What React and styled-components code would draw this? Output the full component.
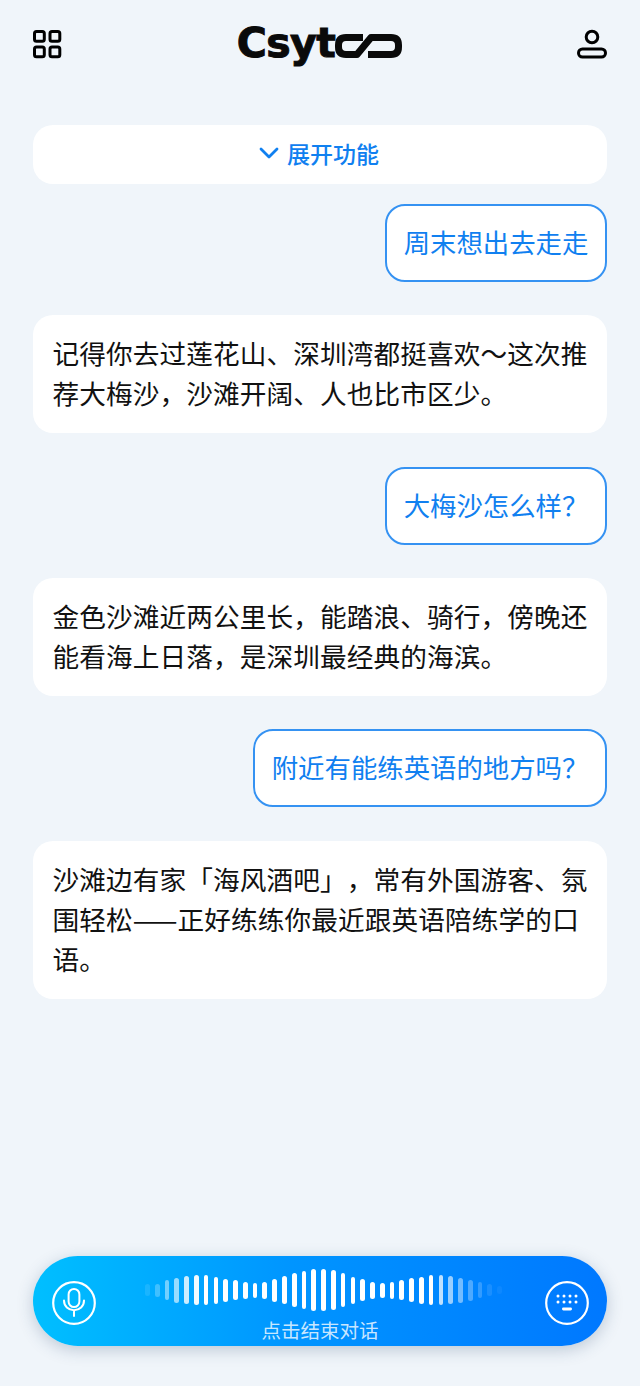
import React from "react";
import styled, { createGlobalStyle } from "styled-components";

const Global = createGlobalStyle`
  html, body { margin: 0; padding: 0; background: #f0f5fa; }
  body {
    font-family: "Noto Sans CJK SC", "Noto Sans", sans-serif;
    text-spacing-trim: space-all;
  }
  * { box-sizing: border-box; }
`;

const Screen = styled.div`
  width: 640px;
  height: 1386px;
  background: #f0f5fa;
  padding: 0 33px;
  display: flex;
  flex-direction: column;
  overflow: hidden;
`;

const Header = styled.header`
  height: 125px;
  padding-top: 24px;
  display: flex;
  justify-content: space-between;
  align-items: flex-start;
`;

const IconSlot = styled.div`
  width: 30px;
  height: 40px;
  display: flex;
  align-items: center;
  justify-content: ${(p) => (p.$end ? "flex-end" : "flex-start")};
  color: #000;
`;

const Brand = styled.div`
  display: flex;
  align-items: center;
  height: 44px;
  margin: -3px 0 0 -1px;
  color: #0a0a0a;
  font-family: "DejaVu Sans", sans-serif;
  font-weight: 700;
  font-size: 41px;
  line-height: 44px;
  letter-spacing: -0.6px;
  -webkit-text-stroke: 1px #0a0a0a;
`;

const MarkSlot = styled.span`
  display: flex;
  margin: 6px 0 0 0;
`;

const ExpandBar = styled.button`
  height: 59px;
  border: 0;
  border-radius: 20px;
  background: #fff;
  color: #1080f0;
  font: 500 23px "Noto Sans CJK SC", sans-serif;
  display: flex;
  align-items: center;
  justify-content: center;
  gap: 8px;
  margin-bottom: 20px;
  padding: 0 2px 3px 0;
`;

const Thread = styled.div`
  display: flex;
  flex-direction: column;
  gap: 33.33px;
  flex: 1;
`;

const UserBubble = styled.div`
  align-self: flex-end;
  height: 78px;
  padding: 16px 16.6px;
  border: 2px solid #3592f2;
  border-radius: 20px;
  background: #fff;
  color: #1080f0;
  font-size: 26.4px;
  line-height: 40px;
  white-space: nowrap;
`;

const ReplyBubble = styled.div`
  padding: 18px 18px 20px 19.5px;
  border-radius: 20px;
  background: #fff;
  color: #111;
  font-size: 26.67px;
  letter-spacing: 0.1px;
  line-height: 40px;
`;

const VoiceBar = styled.div`
  flex: none;
  height: 90px;
  margin-bottom: 40px;
  padding: 0 18.5px;
  border-radius: 45px;
  background: linear-gradient(90deg, #00bfff 0%, #0095ff 45%, #0078ff 100%);
  box-shadow: 0 4px 16px rgba(40, 70, 110, 0.25);
  display: flex;
  align-items: center;
  justify-content: space-between;
`;

const RoundIcon = styled.div`
  width: 44px;
  height: 44px;
  margin-top: 4px;
  display: flex;
`;

const VoiceCenter = styled.div`
  display: flex;
  flex-direction: column;
  align-items: center;
  height: 90px;
`;

const Wave = styled.div`
  height: 46px;
  margin: 11px 0 0 7px;
  display: flex;
  align-items: center;
  gap: 5.1px;
`;

const WaveBar = styled.span`
  width: 4.7px;
  border-radius: 3px;
  background: #fff;
  height: ${(p) => p.$h}px;
  opacity: ${(p) => p.$a};
`;

const VoiceLabel = styled.div`
  color: rgba(255, 255, 255, 0.8);
  font-size: 19.5px;
  line-height: 26px;
  margin-top: 4px;
`;

const waveform = [
  [12, 0.1], [13, 0.25], [20, 0.45], [25, 0.6], [28, 0.8], [30, 0.95], [30, 1], [27, 1],
  [23, 1], [20, 1], [17, 1], [15, 1], [17, 1], [23, 1], [28, 1], [34, 1], [38, 1], [42, 1],
  [42, 1], [40, 1], [34, 1], [27, 1], [22, 1], [17, 1], [15, 1], [17, 1], [20, 1], [24, 1],
  [27, 1], [30, 1], [30, 0.75], [28, 0.6], [25, 0.45], [21, 0.3], [16, 0.2], [12, 0.1], [8, 0.05],
];

const GridIcon = () => (
  <svg width="29" height="29" viewBox="0 0 29 29" fill="none" stroke="currentColor" strokeWidth="3">
    <rect x="1.5" y="1.5" width="9.8" height="9.8" rx="2" />
    <rect x="17" y="1.5" width="9.8" height="9.8" rx="2" />
    <rect x="1.5" y="17" width="9.8" height="9.8" rx="2" />
    <rect x="17" y="17" width="9.8" height="9.8" rx="2" />
  </svg>
);

const UserIcon = () => (
  <svg width="30" height="30" viewBox="0 0 30 30" fill="none" stroke="currentColor" strokeWidth="3">
    <circle cx="15" cy="8" r="5.8" />
    <rect x="1.5" y="20" width="27" height="8" rx="4" />
  </svg>
);

const Chevron = () => (
  <svg width="20" height="14" viewBox="0 0 20 14" fill="none" stroke="currentColor" strokeWidth="2.8" strokeLinecap="round" strokeLinejoin="round">
    <path d="M2 3l8 8 8-8" />
  </svg>
);

const LinkMark = () => (
  <svg width="67" height="24" viewBox="0 0 67 24" fill="none" stroke="#0a0a0a" strokeWidth="7" strokeLinejoin="round">
    <path d="M28 3.5H11Q3.5 3.5 3.5 11V13Q3.5 20.5 11 20.5H22L36 3.5H56Q63.5 3.5 63.5 11V13Q63.5 20.5 56 20.5H33" />
  </svg>
);

const MicIcon = () => (
  <svg width="44" height="44" viewBox="0 0 44 44" fill="none" stroke="#fff" strokeWidth="2" strokeLinecap="round">
    <circle cx="22" cy="22" r="20.8" strokeWidth="2.2" />
    <rect x="16.6" y="8" width="10.8" height="18" rx="5.4" />
    <path d="M12 19.5c0 5.7 4.4 9.7 10 9.7s10-4 10-9.7M22 29.2V35" />
  </svg>
);

const keyColumns = [13, 19, 25, 31];

const KeyboardIcon = () => (
  <svg width="44" height="44" viewBox="0 0 44 44" fill="none" stroke="#fff" strokeWidth="2.2">
    <circle cx="22" cy="22" r="20.8" />
    <g fill="#fff" stroke="none">
      {keyColumns.map((x) => <circle key={`a${x}`} cx={x} cy="15" r="1.5" />)}
      {keyColumns.map((x) => <circle key={`b${x}`} cx={x} cy="21" r="1.5" />)}
      <rect x="17" y="26.6" width="10" height="2.8" rx="1.4" />
    </g>
  </svg>
);

const user = (t) => <UserBubble key={t}>{t}</UserBubble>;

export default function App() {
  return (
    <>
      <Global />
      <Screen>
        <Header>
          <IconSlot><GridIcon /></IconSlot>
          <Brand>Csyt<MarkSlot><LinkMark /></MarkSlot></Brand>
          <IconSlot $end><UserIcon /></IconSlot>
        </Header>
        <ExpandBar><Chevron />展开功能</ExpandBar>
        <Thread>
          {user("周末想出去走走")}
          <ReplyBubble>记得你去过莲花山、深圳湾都挺喜欢～这次推荐大梅沙，沙滩开阔、人也比市区少。</ReplyBubble>
          {user("大梅沙怎么样？")}
          <ReplyBubble>金色沙滩近两公里长，能踏浪、骑行，傍晚还能看海上日落，是深圳最经典的海滨。</ReplyBubble>
          {user("附近有能练英语的地方吗？")}
          <ReplyBubble>沙滩边有家「海风酒吧」，常有外国游客、氛围轻松——正好练练你最近跟英语陪练学的口语。</ReplyBubble>
        </Thread>
        <VoiceBar>
          <RoundIcon><MicIcon /></RoundIcon>
          <VoiceCenter>
            <Wave>
              {waveform.map(([h, a], i) => <WaveBar key={i} $h={h} $a={a} />)}
            </Wave>
            <VoiceLabel>点击结束对话</VoiceLabel>
          </VoiceCenter>
          <RoundIcon><KeyboardIcon /></RoundIcon>
        </VoiceBar>
      </Screen>
    </>
  );
}
